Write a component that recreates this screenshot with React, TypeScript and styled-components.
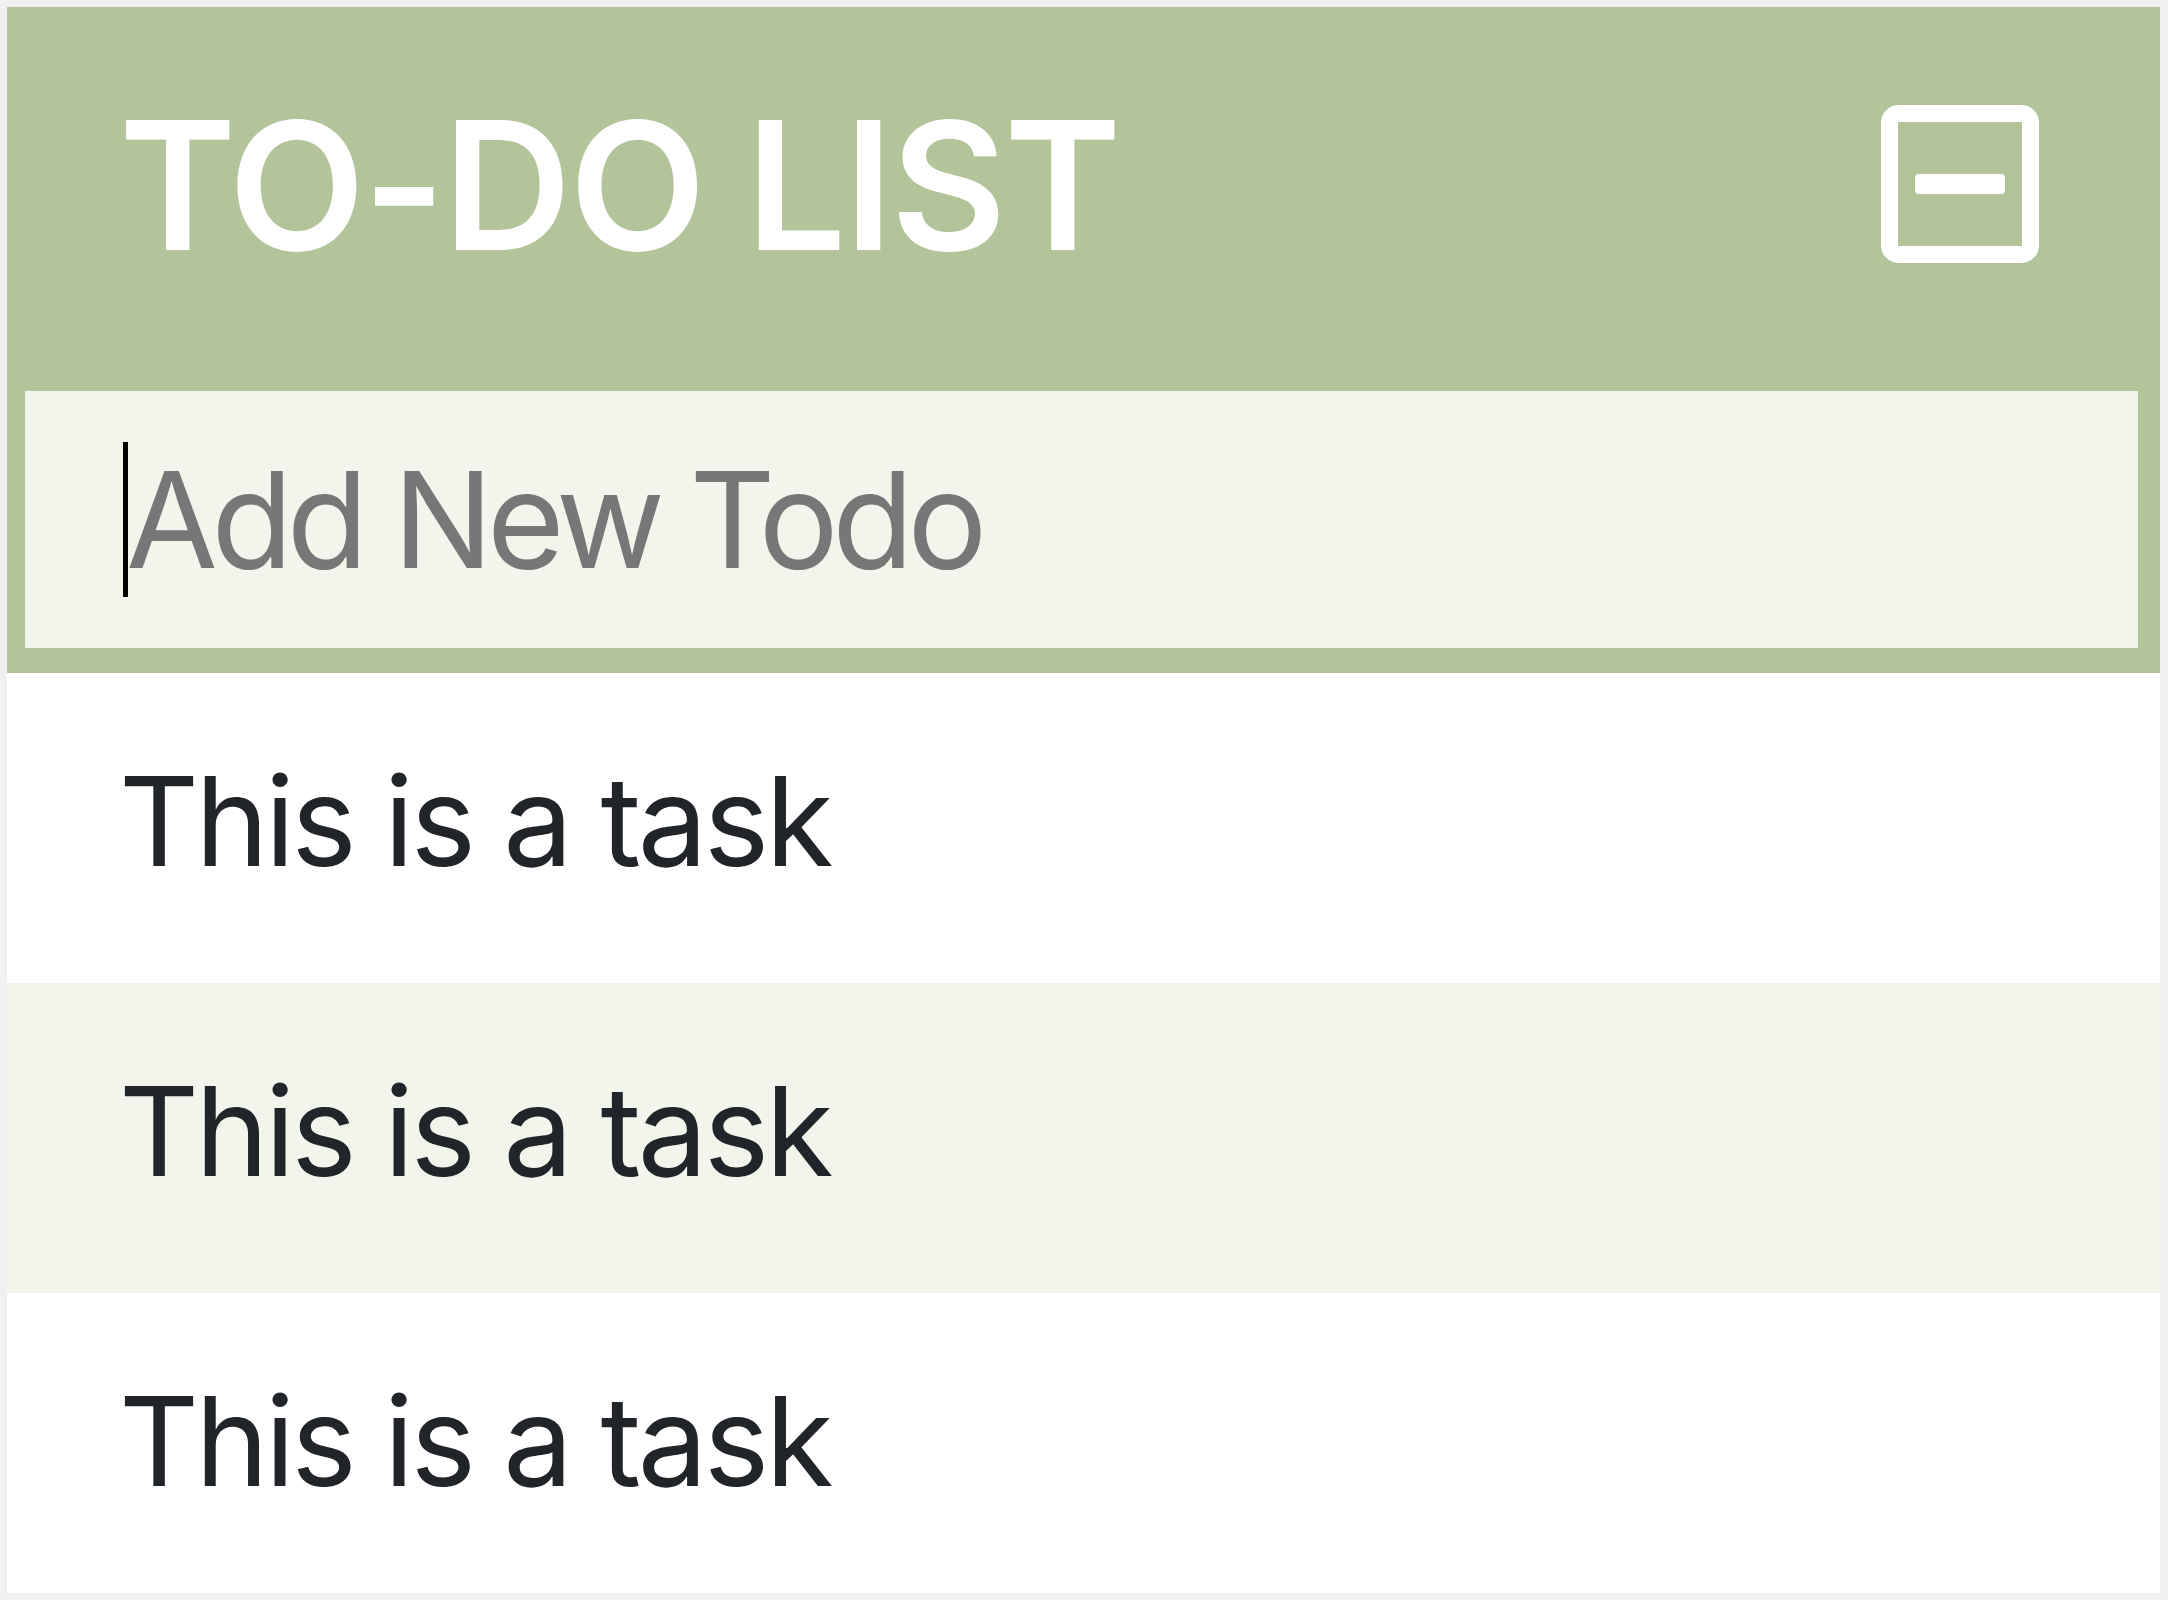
import React from "react";
import styled, { createGlobalStyle } from "styled-components";

const GlobalStyle = createGlobalStyle`
  html, body {
    margin: 0;
    padding: 0;
    background: #f0f0f0;
  }
  body {
    padding: 7px 8px 7px 7px;
    font-family: Inter, "Liberation Sans", sans-serif;
  }
`;

const tasks = ["This is a task", "This is a task", "This is a task"];

const MinusIcon: React.FC = () => (
  <svg width="158" height="158" viewBox="0 0 158 158" fill="none">
    <rect x="8.5" y="8.5" width="141" height="141" rx="9" stroke="#fff" strokeWidth="17" />
    <rect x="34" y="69" width="90" height="20" rx="4" fill="#fff" />
  </svg>
);

const App: React.FC = () => {
  return (
    <>
      <GlobalStyle />
      <SCard>
        <SHeader>
          <STitleRow>
            <STitle>TO-DO LIST</STitle>
            <SIconButton aria-label="collapse">
              <MinusIcon />
            </SIconButton>
          </STitleRow>
          <SInputWrap>
            <SCaret />
            <SInput placeholder="Add New Todo" />
          </SInputWrap>
        </SHeader>
        <SList>
          {tasks.map((t, i) => (
            <STask key={i} striped={i % 2 === 1}>
              {t}
            </STask>
          ))}
        </SList>
      </SCard>
    </>
  );
};

const SCard = styled.div`
  height: 1586px;
  background: #fff;
  overflow: hidden;
  display: flex;
  flex-flow: column nowrap;
`;

const SHeader = styled.div`
  background: #b3c49b;
  padding-bottom: 25px;
`;

const STitleRow = styled.div`
  display: flex;
  align-items: flex-start;
  justify-content: space-between;
  height: 158px;
  padding: 98px 121px 128px 112px;
`;

const STitle = styled.h1`
  margin: 5px 0 0;
  font-size: 178px;
  font-weight: 600;
  line-height: 152px;
  color: #fff;
  letter-spacing: -0.014em;
  white-space: nowrap;
`;

const SIconButton = styled.button`
  border: none;
  background: none;
  padding: 0;
  display: flex;
  cursor: pointer;
`;

const SInputWrap = styled.div`
  position: relative;
  margin: 0 22px 0 18px;
`;

const SCaret = styled.span`
  position: absolute;
  left: 98px;
  top: 51px;
  width: 5px;
  height: 155px;
  background: #000;
`;

const SInput = styled.input`
  display: block;
  width: 100%;
  box-sizing: border-box;
  height: 257px;
  border: none;
  outline: none;
  background: #f2f5ec;
  padding: 0 0 0 101px;
  font-family: Inter, "Liberation Sans", sans-serif;
  font-size: 133px;
  letter-spacing: -0.047em;
  color: #212529;
  &::placeholder {
    color: #777;
  }
`;

const SList = styled.ul`
  list-style: none;
  margin: 0;
  padding: 0;
`;

const STask = styled.li<{ striped?: boolean }>`
  box-sizing: border-box;
  height: 310px;
  padding: 73px 0 0 112px;
  font-size: 124px;
  line-height: 150px;
  letter-spacing: -0.03em;
  color: #212529;
  background: ${({ striped }) => (striped ? "#f2f5ec" : "#fff")};
`;

export default App;
